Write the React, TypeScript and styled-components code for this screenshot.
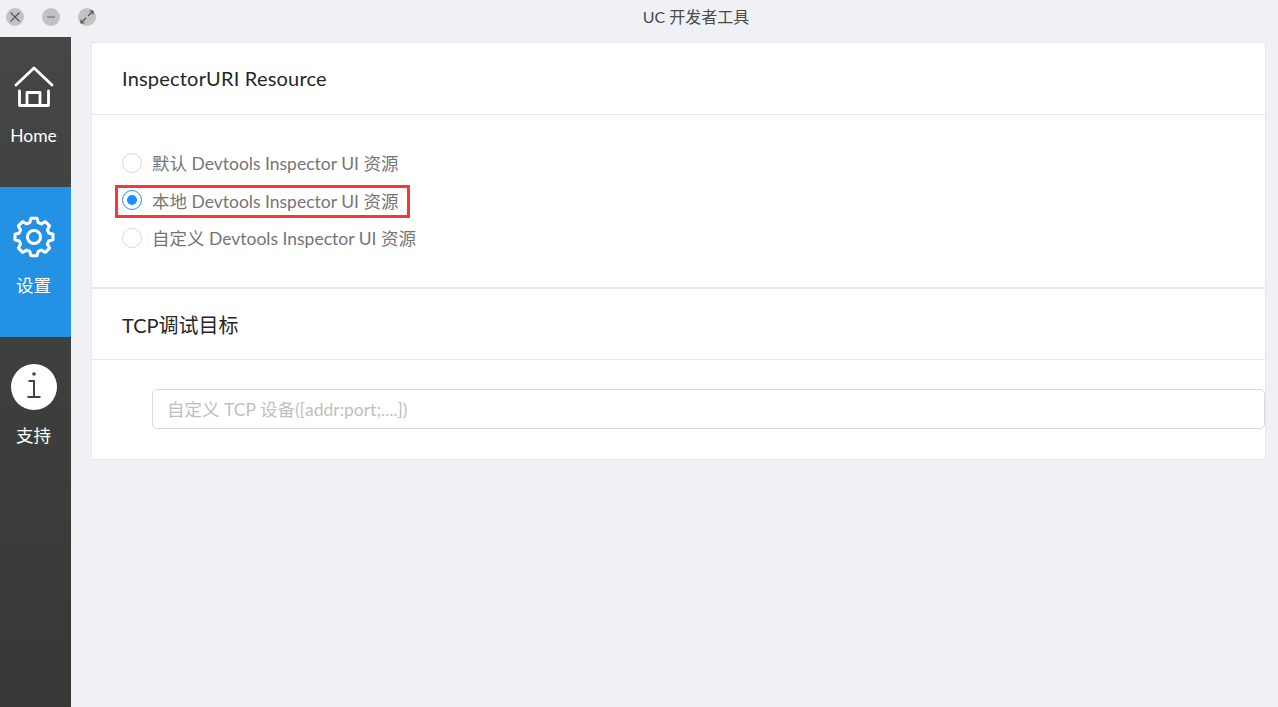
import React from 'react';
import styled, { createGlobalStyle } from 'styled-components';

const GlobalStyle = createGlobalStyle`
  html, body {
    margin: 0;
    height: 100%;
    background: #f0f1f5;
    font-family: Lato, "Noto Sans CJK SC", sans-serif;
  }
  #root {
    height: 100%;
  }
`;

const Page = styled.div`
  height: 707px;
  display: flex;
  flex-direction: column;
  overflow: hidden;
`;

const TitleBar = styled.div`
  height: 37px;
  flex: none;
  display: flex;
  align-items: center;
  padding: 0 0 3px 6px;
  box-sizing: border-box;
  position: relative;
`;

const WindowButtons = styled.div`
  display: flex;
  gap: 18px;
`;

const WindowButton = styled.div`
  width: 18px;
  height: 18px;
  border-radius: 50%;
  background: #c2c2c2;
  display: flex;
  align-items: center;
  justify-content: center;
`;

const WindowTitle = styled.div`
  position: absolute;
  left: 114px;
  right: 0;
  top: 7px;
  text-align: center;
  font-size: 16px;
  line-height: 20px;
  color: #4a4a4a;
`;

const Body = styled.div`
  flex: 1;
  display: flex;
  min-height: 0;
`;

const Sidebar = styled.nav`
  width: 71px;
  flex: none;
  background: linear-gradient(180deg, #454746 0%, #363836 100%);
`;

const NavItem = styled.div<{ $active?: boolean }>`
  height: 150px;
  box-sizing: border-box;
  padding: 27px 4px 0 0;
  display: flex;
  flex-direction: column;
  align-items: center;
  gap: 14px;
  color: #fff;
  background: ${(p) => (p.$active ? '#2492e4' : 'transparent')};
`;

const NavLabel = styled.span`
  font-size: 17.5px;
  line-height: 24px;
`;

const IconSlot = styled.svg`
  width: 46px;
  height: 46px;
  display: block;
`;

const Main = styled.main`
  flex: 1;
  padding: 5px 12px 0 20px;
  min-width: 0;
`;

const Card = styled.section<{ $height: number }>`
  height: ${(p) => p.$height}px;
  box-sizing: border-box;
  background: #fff;
  border: 1px solid #e8e8e8;
  border-radius: 2px;
  display: flex;
  flex-direction: column;
`;

const CardHeader = styled.header<{ $height: number; $tracking?: number; $lift?: number }>`
  height: ${(p) => p.$height}px;
  flex: none;
  box-sizing: border-box;
  border-bottom: 1px solid #e8e8e8;
  padding: 0 0 ${(p) => p.$lift ?? 0}px 30px;
  display: flex;
  align-items: center;
  font-size: 20px;
  letter-spacing: ${(p) => p.$tracking ?? 0}px;
  color: #262626;
`;

const RadioList = styled.div`
  padding: 29px 30px 0;
  display: flex;
  flex-direction: column;
  align-items: flex-start;
`;

const RadioRow = styled.label<{ $flagged?: boolean }>`
  height: ${(p) => (p.$flagged ? 38 : 37)}px;
  display: flex;
  align-items: center;
  gap: 10px;
  font-size: 17.5px;
  color: #757575;
  position: relative;
  ${(p) =>
    p.$flagged &&
    `
    &::after {
      content: '';
      position: absolute;
      left: -7px;
      right: -12px;
      top: 4px;
      bottom: 1px;
      border: 3px solid #fb3636;
    }
  `}
`;

const RadioDot = styled.span<{ $checked?: boolean }>`
  width: 20px;
  height: 20px;
  box-sizing: border-box;
  border-radius: 50%;
  border: 1px solid ${(p) => (p.$checked ? '#1890ff' : '#d9d9d9')};
  display: flex;
  align-items: center;
  justify-content: center;
  &::after {
    content: '';
    width: 10px;
    height: 10px;
    border-radius: 50%;
    background: ${(p) => (p.$checked ? '#1890ff' : 'transparent')};
  }
`;

const InputWrap = styled.div`
  padding: 29px 0 0 60px;
`;

const TextInput = styled.input`
  display: block;
  width: 100%;
  height: 40px;
  box-sizing: border-box;
  border: 1px solid #d9d9d9;
  border-radius: 5px;
  padding: 0 14px;
  font: inherit;
  font-size: 17.5px;
  background: #fff;
  &::placeholder {
    color: #bfbfbf;
    opacity: 1;
  }
`;

function App() {
  return (
    <Page>
      <GlobalStyle />
      <TitleBar>
        <WindowButtons>
          <WindowButton>
            <svg width="12" height="12" viewBox="0 0 12 12" fill="none" stroke="#555" strokeWidth="1.1">
              <path d="M1.5 1.5l9 9M10.5 1.5l-9 9" />
            </svg>
          </WindowButton>
          <WindowButton>
            <svg width="12" height="12" viewBox="0 0 12 12" fill="none" stroke="#777" strokeWidth="1.2">
              <path d="M2 6h8" />
            </svg>
          </WindowButton>
          <WindowButton>
            <svg width="14" height="14" viewBox="0 0 14 14" fill="none" stroke="#555" strokeWidth="1.1">
              <path d="M8 6l5-5M9.500 1h3.500v3.500M6 8l-5 5M1 9.500V13h3.500" />
            </svg>
          </WindowButton>
        </WindowButtons>
        <WindowTitle>UC 开发者工具</WindowTitle>
      </TitleBar>
      <Body>
        <Sidebar>
          <NavItem>
            <IconSlot viewBox="0 0 46 46" fill="none" stroke="#fff" strokeWidth="2.800" strokeLinecap="round" strokeLinejoin="round">
              <path d="M5 21L23 4l18 17" />
              <path d="M8.500 27v14.500h29V27" />
              <path d="M16 41.500V28.500h13v13" />
            </IconSlot>
            <NavLabel>Home</NavLabel>
          </NavItem>
          <NavItem $active>
            <IconSlot viewBox="0 0 46 46" fill="none" stroke="#fff" strokeWidth="3" strokeLinejoin="round">
              <path
                d="M19.300 4.500h7.400l1.500 5.400 3.800 1.600 4.900-2.700 5.200 5.200-2.700 4.900 1.600 3.800 5.300 1.500v6.800l-5.300 1.500-1.600 3.800 2.700 4.900-5.200 5.200-4.900-2.700-3.800 1.600-1.500 5.400h-7.400l-1.500-5.400-3.800-1.600-4.900 2.700-5.200-5.200 2.700-4.900-1.600-3.800-5.300-1.500v-6.800l5.300-1.500 1.600-3.800-2.700-4.900 5.200-5.200 4.900 2.700 3.800-1.600z"
                transform="translate(4.250 0.500) scale(0.815)"
                strokeWidth="3.700"
              />
              <circle cx="23" cy="23" r="6.500" />
            </IconSlot>
            <NavLabel>设置</NavLabel>
          </NavItem>
          <NavItem>
            <IconSlot viewBox="0 0 46 46">
              <circle cx="23" cy="23" r="23" fill="#fff" />
              <circle cx="23" cy="10" r="1.800" fill="#444" />
              <path d="M17.500 17h5.500v16M16.500 33h13" fill="none" stroke="#444" strokeWidth="2" />
            </IconSlot>
            <NavLabel>支持</NavLabel>
          </NavItem>
        </Sidebar>
        <Main>
          <Card $height={246}>
            <CardHeader $height={72} $tracking={0.2} $lift={1}>InspectorURI Resource</CardHeader>
            <RadioList>
              <RadioRow>
                <RadioDot />
                默认 Devtools Inspector UI 资源
              </RadioRow>
              <RadioRow $flagged>
                <RadioDot $checked />
                本地 Devtools Inspector UI 资源
              </RadioRow>
              <RadioRow>
                <RadioDot />
                自定义 Devtools Inspector UI 资源
              </RadioRow>
            </RadioList>
          </Card>
          <Card $height={172}>
            <CardHeader $height={71}>TCP调试目标</CardHeader>
            <InputWrap>
              <TextInput placeholder="自定义 TCP 设备([addr:port;....])" />
            </InputWrap>
          </Card>
        </Main>
      </Body>
    </Page>
  );
}

export default App;
